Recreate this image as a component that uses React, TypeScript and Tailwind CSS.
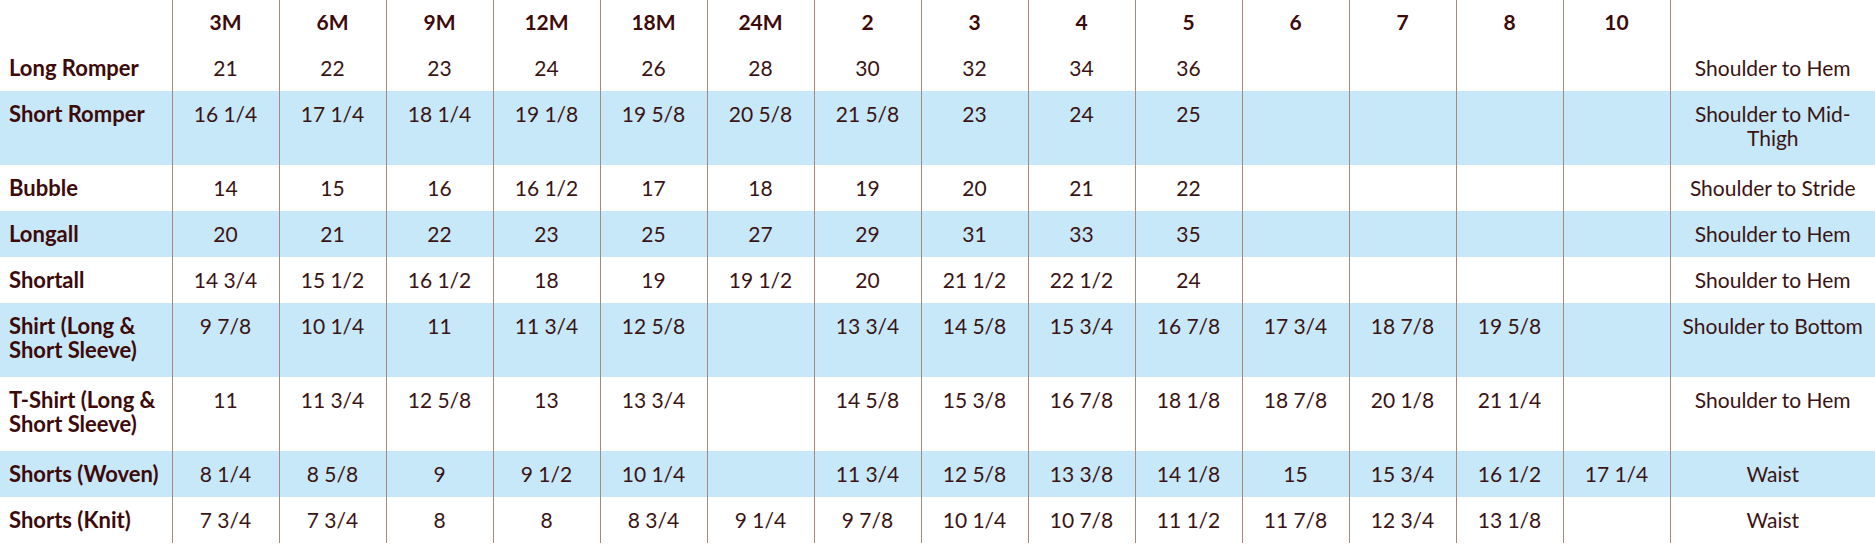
const sizes = ["3M", "6M", "9M", "12M", "18M", "24M", "2", "3", "4", "5", "6", "7", "8", "10"];

type Row = { label: string[]; values: string[]; measure: string; tall?: boolean };

const rows: Row[] = [
  { label: ["Long Romper"], values: ["21", "22", "23", "24", "26", "28", "30", "32", "34", "36", "", "", "", ""], measure: "Shoulder to Hem" },
  { label: ["Short Romper"], values: ["16 1/4", "17 1/4", "18 1/4", "19 1/8", "19 5/8", "20 5/8", "21 5/8", "23", "24", "25", "", "", "", ""], measure: "Shoulder to Mid-Thigh", tall: true },
  { label: ["Bubble"], values: ["14", "15", "16", "16 1/2", "17", "18", "19", "20", "21", "22", "", "", "", ""], measure: "Shoulder to Stride" },
  { label: ["Longall"], values: ["20", "21", "22", "23", "25", "27", "29", "31", "33", "35", "", "", "", ""], measure: "Shoulder to Hem" },
  { label: ["Shortall"], values: ["14 3/4", "15 1/2", "16 1/2", "18", "19", "19 1/2", "20", "21 1/2", "22 1/2", "24", "", "", "", ""], measure: "Shoulder to Hem" },
  { label: ["Shirt (Long &", "Short Sleeve)"], values: ["9 7/8", "10 1/4", "11", "11 3/4", "12 5/8", "", "13 3/4", "14 5/8", "15 3/4", "16 7/8", "17 3/4", "18 7/8", "19 5/8", ""], measure: "Shoulder to Bottom", tall: true },
  { label: ["T-Shirt (Long &", "Short Sleeve)"], values: ["11", "11 3/4", "12 5/8", "13", "13 3/4", "", "14 5/8", "15 3/8", "16 7/8", "18 1/8", "18 7/8", "20 1/8", "21 1/4", ""], measure: "Shoulder to Hem", tall: true },
  { label: ["Shorts (Woven)"], values: ["8 1/4", "8 5/8", "9", "9 1/2", "10 1/4", "", "11 3/4", "12 5/8", "13 3/8", "14 1/8", "15", "15 3/4", "16 1/2", "17 1/4"], measure: "Waist" },
  { label: ["Shorts (Knit)"], values: ["7 3/4", "7 3/4", "8", "8", "8 3/4", "9 1/4", "9 7/8", "10 1/4", "10 7/8", "11 1/2", "11 7/8", "12 3/4", "13 1/8", ""], measure: "Waist" },
];

export default function App() {
  return (
    <div className="w-[1875px] h-[546px] overflow-hidden bg-white font-['Lato','Noto_Sans',sans-serif] text-[21px] leading-[24px] text-[#3a1414]">
      <table className="w-[1875px] table-fixed border-collapse">
        <colgroup>
          <col className="w-[172px]" />
          {sizes.map((s) => (
            <col key={s} className="w-[107px]" />
          ))}
          <col />
        </colgroup>
        <thead>
          <tr className="h-[45px]">
            <th className="align-top pt-[10px]"></th>
            {sizes.map((s) => (
              <th key={s} className="border-x border-[#a8877d] align-top pt-[10px] text-center font-bold text-[#3d0a0a]">
                {s}
              </th>
            ))}
            <th></th>
          </tr>
        </thead>
        <tbody>
          {rows.map((r, i) => (
            <tr key={i} className={`${r.tall ? "h-[74px]" : "h-[46px]"} ${i % 2 === 1 ? "bg-[#c7e8f8]" : "bg-white"}`}>
              <td className="align-top pt-[11px] pl-[9px] text-[22px] font-bold whitespace-nowrap text-[#3d0a0a]">
                {r.label.map((l) => (
                  <div key={l}>{l}</div>
                ))}
              </td>
              {r.values.map((v, j) => (
                <td key={j} className="border-x border-[#a8877d] align-top pt-[11px] text-center">
                  {v}
                </td>
              ))}
              <td className="align-top pt-[11px] px-[10px] text-center">{r.measure}</td>
            </tr>
          ))}
        </tbody>
      </table>
    </div>
  );
}
